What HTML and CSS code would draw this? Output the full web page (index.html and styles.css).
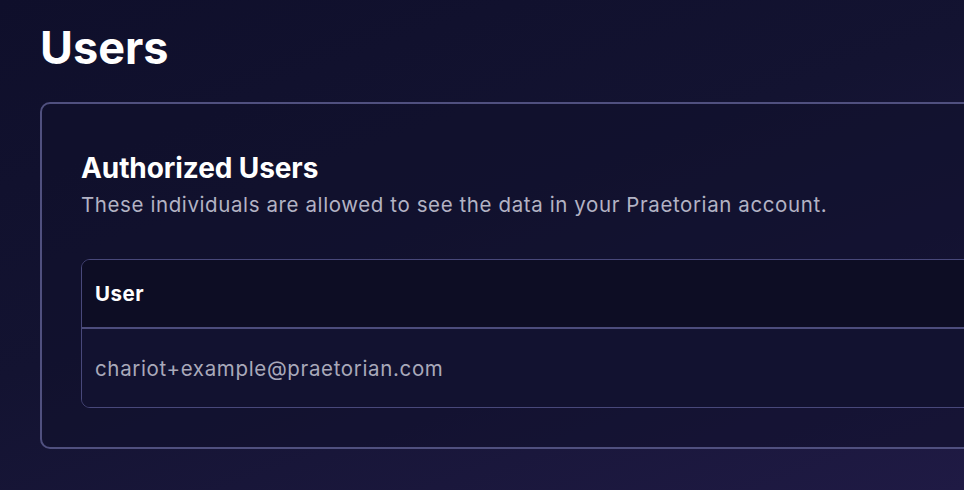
FILE: index.html
```html
<!DOCTYPE html>
<html>
<head>
<meta charset="utf-8">
<link rel="stylesheet" href="styles.css">
</head>
<body>
<main class="page">
  <h1 class="title">Users</h1>
  <section class="card">
    <h2 class="card-title">Authorized Users</h2>
    <p class="card-sub">These individuals are allowed to see the data in your Praetorian account.</p>
    <div class="table">
      <div class="thead">User</div>
      <div class="trow">chariot+example@praetorian.com</div>
    </div>
  </section>
</main>
</body>
</html>
```

FILE: styles.css
```css
html, body {
  margin: 0;
  padding: 0;
  height: 100%;
  overflow: hidden;
}
body {
  background: linear-gradient(160deg, #0f0f2b 0%, #131331 45%, #1f1a44 100%);
  font-family: Inter, "Noto Sans", sans-serif;
  color: #ffffff;
}
.page {
  padding: 20px 0 0 40px;
  width: 1200px;
}
.title {
  margin: 0;
  font-size: 45px;
  line-height: 56px;
  font-weight: 700;
}
.card {
  margin-top: 26px;
  border: 2px solid #50507f;
  border-radius: 10px;
  padding: 46px 40px 39px 39px;
  background: rgba(16, 16, 44, 0.55);
}
.card-title {
  margin: 0;
  font-size: 28px;
  line-height: 36px;
  font-weight: 700;
  letter-spacing: -0.1px;
}
.card-sub {
  margin: 4px 0 0;
  font-size: 20.5px;
  line-height: 30px;
  letter-spacing: 0.6px;
  color: #b3b3c4;
}
.table {
  margin-top: 39px;
  border: 1px solid #48487a;
  border-radius: 9px;
  overflow: hidden;
}
.thead {
  height: 67px;
  display: flex;
  align-items: center;
  padding-left: 13px;
  font-size: 20.5px;
  font-weight: 700;
  letter-spacing: 0.5px;
  background: #0d0d24;
  border-bottom: 2px solid #4c4c7c;
}
.trow {
  height: 78px;
  display: flex;
  align-items: center;
  padding-left: 13px;
  font-size: 20.5px;
  letter-spacing: 0.65px;
  color: #a9a9ba;
  background: #121230;
}
```
